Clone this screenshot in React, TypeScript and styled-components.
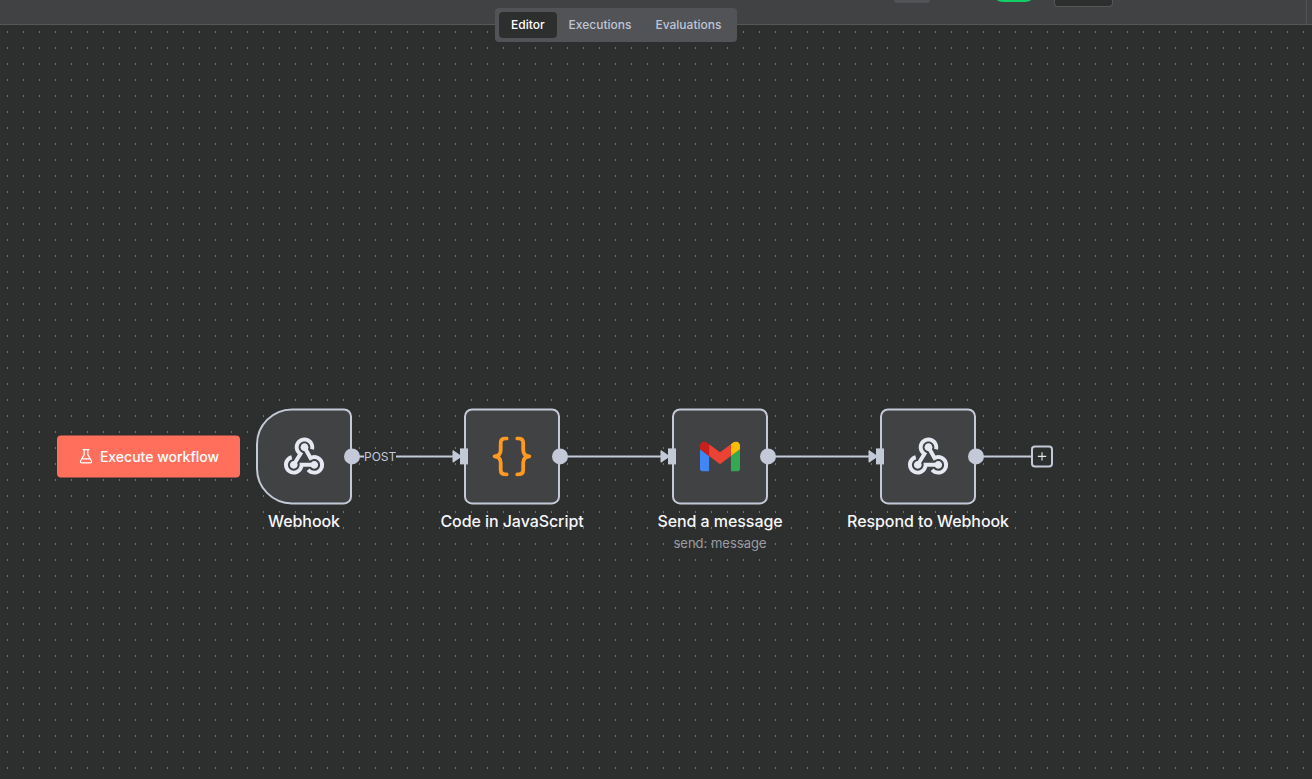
import React from 'react';
import styled, { createGlobalStyle, css } from 'styled-components';

const GlobalStyle = createGlobalStyle`
  * { box-sizing: border-box; }
  body { margin: 0; background: #2d2e2e; font-family: Inter, "Liberation Sans", sans-serif; }
`;

const wire = '#c4c9d8';

const Page = styled.div`
  position: relative;
  display: flex;
  flex-direction: column;
  width: 100%;
  height: 779px;
  overflow: hidden;
`;

const Header = styled.header`
  display: flex;
  justify-content: flex-end;
  height: 25px;
  flex: none;
  background: #414244;
  border-bottom: 1px solid #555658;
`;

const HeaderActions = styled.div`
  display: flex;
  align-items: flex-start;
  padding-right: 193px;
  border-right: 1px solid #525356;
  margin-right: 5px;
`;

const ShareButton = styled.div`
  width: 36px;
  height: 3px;
  margin-right: 67px;
  border-radius: 0 0 4px 4px;
  background: #525356;
`;

const ActiveToggle = styled.div`
  width: 34px;
  height: 2px;
  margin-right: 23px;
  border-radius: 0 0 10px 10px / 0 0 2px 2px;
  background: #13cf68;
`;

const SaveButton = styled.div`
  width: 59px;
  height: 7px;
  border: 1px solid #555658;
  border-top: 0;
  border-radius: 0 0 4px 4px;
  background: #2d2e2e;
`;

const Tabs = styled.nav`
  position: absolute;
  top: 8px;
  left: 495px;
  z-index: 2;
  display: flex;
  width: 242px;
  padding: 4px;
  border-radius: 4px;
  background: #525356;
`;

const Tab = styled.button<{ $active?: boolean }>`
  height: 26px;
  padding: 0 12px;
  border: 0;
  border-radius: 4px;
  background: ${p => (p.$active ? '#2d2e2e' : 'transparent')};
  color: ${p => (p.$active ? '#ffffff' : '#bec5d6')};
  font: 500 12px/26px Inter, sans-serif;
`;

const Canvas = styled.main`
  position: relative;
  flex: 1;
`;

const Drawing = styled.svg`
  position: absolute;
  inset: 0;
  width: 100%;
  height: 100%;
`;

const Flow = styled.div`
  position: absolute;
  inset: 0;
  transform: translateY(0.4px);
`;

const Node = styled.section<{ $x: number }>`
  position: absolute;
  left: ${p => p.$x}px;
  top: 383px;
  width: 96px;
  display: flex;
  flex-direction: column;
  align-items: center;
`;

const NodeBox = styled.div<{ $trigger?: boolean }>`
  position: relative;
  display: flex;
  align-items: center;
  justify-content: center;
  width: 96px;
  height: 96px;
  border: 2px solid ${wire};
  border-radius: ${p => (p.$trigger ? '36px 8px 8px 36px' : '8px')};
  background: #414244;
`;

const handle = css`
  position: absolute;
  top: 38px;
  height: 16px;
  background: ${wire};
`;

const Output = styled.i`
  ${handle}
  right: -10px;
  width: 16px;
  border-radius: 50%;
`;

const Input = styled.i`
  ${handle}
  left: -6px;
  width: 8px;
`;

const Label = styled.div`
  margin-top: 8px;
  color: #f5f6fa;
  font-size: 16px;
  font-weight: 500;
  line-height: 19px;
  letter-spacing: -0.07px;
  white-space: nowrap;
`;

const Subtitle = styled.div`
  margin-top: 4px;
  color: #9a9ca2;
  font-size: 13px;
  line-height: 16px;
  white-space: nowrap;
`;

const ExecuteButton = styled.button`
  position: absolute;
  left: 57px;
  top: 410px;
  display: flex;
  align-items: center;
  justify-content: center;
  gap: 7px;
  width: 183px;
  height: 42px;
  padding: 1px 0 0 1px;
  border: 0;
  border-radius: 4px;
  background: #ff6f5c;
  color: #fff;
  font: 500 14px/17px Inter, sans-serif;

  svg {
    margin-bottom: 1px;
  }
`;

const EdgeLabel = styled.span`
  position: absolute;
  left: 364px;
  top: 424px;
  color: ${wire};
  background: #2d2e2e;
  font-size: 12px;
  line-height: 15px;
`;

const AddButton = styled.button`
  position: absolute;
  left: 1031px;
  top: 420px;
  display: flex;
  align-items: center;
  justify-content: center;
  width: 22px;
  height: 22px;
  padding: 0;
  border: 2px solid ${wire};
  border-radius: 4px;
  background: #2d2e2e;
`;

const WebhookIcon = () => (
  <svg width="40" height="40" viewBox="4 3.9 41 41" fill="#e6e9f2">
    <path d="M35 37c-2.2 0-4-1.8-4-4s1.8-4 4-4 4 1.8 4 4-1.8 4-4 4z" />
    <path d="M35 43c-3 0-5.9-1.4-7.8-3.7l3.1-2.5c1.1 1.4 2.9 2.3 4.7 2.3 3.3 0 6-2.7 6-6s-2.7-6-6-6c-1 0-2 .3-2.9.7l-1.7 1L23.3 16l3.5-1.9 5.3 9.4c1-.3 2-.5 3-.5 5.5 0 10 4.5 10 10s-4.6 10-10.1 10z" />
    <path d="M14 43C8.5 43 4 38.5 4 33c0-4.6 3.1-8.5 7.5-9.7l1 3.9C9.9 27.9 8 30.3 8 33c0 3.3 2.7 6 6 6s6-2.7 6-6v-2h15v4H23.8c-.9 4.6-5 8-9.8 8z" />
    <path d="M14 37c-2.2 0-4-1.8-4-4s1.8-4 4-4 4 1.8 4 4-1.8 4-4 4z" />
    <path d="M25 19c-2.2 0-4-1.8-4-4s1.8-4 4-4 4 1.8 4 4-1.8 4-4 4z" />
    <path d="M15.7 34L12.3 32l5.9-9.7c-2-1.9-3.2-4.5-3.2-7.3 0-5.5 4.5-10 10-10s10 4.5 10 10c0 .9-.1 1.7-.3 2.5l-3.9-1c.1-.5.2-1 .2-1.5 0-3.3-2.7-6-6-6s-6 2.7-6 6c0 2.1 1.1 4 2.9 5.1l1.7 1L15.7 34z" />
  </svg>
);

const CodeIcon = () => (
  <svg width="40" height="40" viewBox="0 0 40 40" fill="none" stroke="#ff9922" strokeWidth="3.8" strokeLinecap="round" strokeLinejoin="round">
    <path d="M14.6 2H13.3Q8.7 2 8.7 6.6V13.6C8.7 17.4 6.4 19.6 2.6 20C6.4 20.4 8.7 22.6 8.7 26.4V33.4Q8.7 38 13.3 38H14.6" />
    <path d="M25.3 2H26.6Q31.2 2 31.2 6.6V13.6C31.2 17.4 33.5 19.6 37.3 20C33.5 20.4 31.2 22.6 31.2 26.4V33.4Q31.2 38 26.6 38H25.3" />
  </svg>
);

const GmailIcon = () => (
  <svg width="40" height="30" viewBox="52 42 88 66">
    <path fill="#4285f4" d="M58 108h14V74L52 59v43c0 3.32 2.69 6 6 6" />
    <path fill="#34a853" d="M120 108h14c3.32 0 6-2.69 6-6V59l-20 15" />
    <path fill="#fbbc04" d="M120 48v26l20-15v-8c0-7.42-8.47-11.65-14.4-7.2" />
    <path fill="#ea4335" d="M72 74V48l24 18 24-18v26L96 92" />
    <path fill="#c5221f" d="M52 51v8l20 15V48l-5.6-4.2c-5.94-4.45-14.4-.22-14.4 7.2" />
  </svg>
);

const FlaskIcon = () => (
  <svg width="14" height="16" viewBox="0 0 14 16" fill="none" stroke="#fff" strokeWidth="1.2" strokeLinecap="round" strokeLinejoin="round">
    <path d="M4 1.2h6M5.2 1.2v5L1.6 12.4Q.9 14.3 2.8 14.5h8.4q1.9-.2 1.2-2.1L8.8 6.2v-5M3.2 10.4h7.6" />
  </svg>
);

const nodes = [
  { x: 256, label: 'Webhook', icon: <WebhookIcon />, trigger: true },
  { x: 464, label: 'Code in JavaScript', icon: <CodeIcon /> },
  { x: 672, label: 'Send a message', subtitle: 'send: message', icon: <GmailIcon /> },
  { x: 880, label: 'Respond to Webhook', icon: <WebhookIcon /> },
];

export default function App() {
  return (
    <Page>
      <GlobalStyle />
      <Header>
        <HeaderActions>
          <ShareButton />
          <ActiveToggle />
          <SaveButton />
        </HeaderActions>
      </Header>
      <Tabs>
        <Tab $active>Editor</Tab>
        <Tab>Executions</Tab>
        <Tab>Evaluations</Tab>
      </Tabs>
      <Canvas>
        <Drawing>
          <defs>
            <pattern id="dots" width="16" height="16" patternUnits="userSpaceOnUse">
              <rect x="7" y="6" width="1" height="2" fill="#727373" />
            </pattern>
          </defs>
          <rect width="100%" height="100%" fill="url(#dots)" />
        </Drawing>
        <Flow>
          <Drawing>
            {[352, 560, 768].map(x => (
              <g key={x}>
                <path d={`M${x} 431H${x + 104}`} stroke={wire} strokeWidth="2" />
                <path d={`M${x + 101} 425.2L${x + 109.5} 431L${x + 101} 436.8Z`} fill={wire} stroke={wire} strokeLinejoin="round" />
              </g>
            ))}
            <path d="M976 431H1032" stroke={wire} strokeWidth="2" />
          </Drawing>
          <EdgeLabel>POST</EdgeLabel>
          {nodes.map(n => (
            <Node key={n.x} $x={n.x}>
              <NodeBox $trigger={n.trigger}>
                {!n.trigger && <Input />}
                {n.icon}
                <Output />
              </NodeBox>
              <Label>{n.label}</Label>
              {n.subtitle && <Subtitle>{n.subtitle}</Subtitle>}
            </Node>
          ))}
          <ExecuteButton>
            <FlaskIcon />
            Execute workflow
          </ExecuteButton>
          <AddButton aria-label="Add node">
            <svg width="10" height="10" viewBox="0 0 10 10" stroke="#e6e9f2" strokeWidth="1.1">
              <path d="M5 .8v8.4M.8 5h8.4" />
            </svg>
          </AddButton>
        </Flow>
      </Canvas>
    </Page>
  );
}
